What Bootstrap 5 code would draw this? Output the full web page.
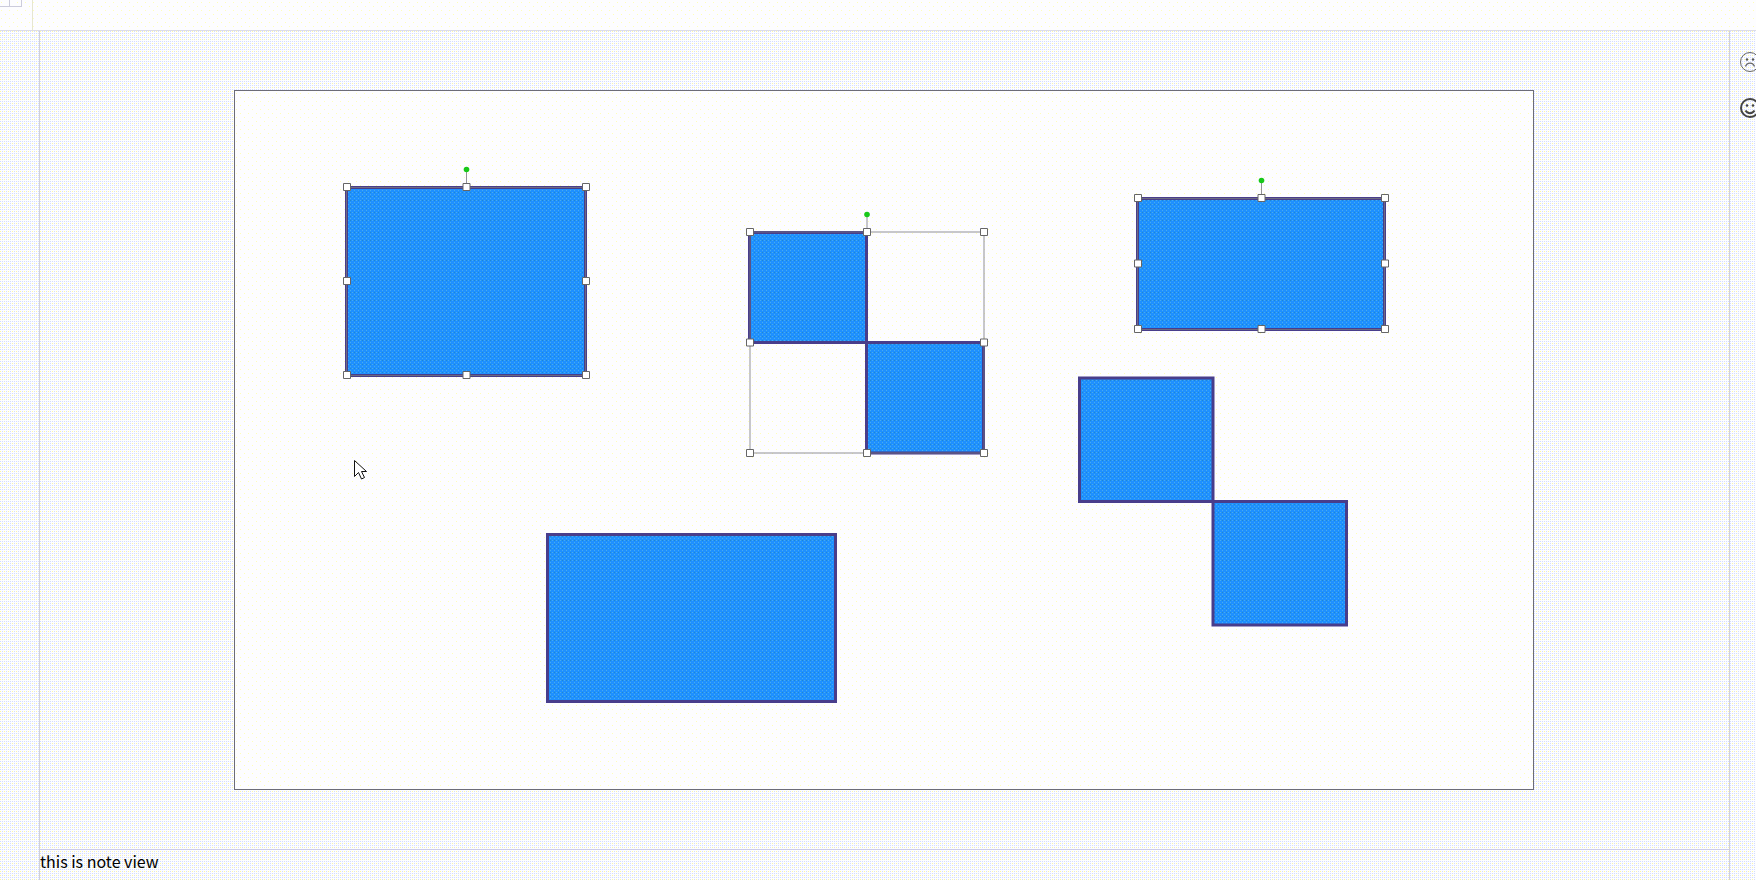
<!DOCTYPE html>
<html lang="en">
<head>
<meta charset="utf-8">
<meta name="viewport" content="width=device-width, initial-scale=1">
<title>Slide editor</title>
<link href="https://cdn.jsdelivr.net/npm/bootstrap@5.3.0/dist/css/bootstrap.min.css" rel="stylesheet">
<style>
body{font-family:"Noto Sans CJK SC","Noto Sans",sans-serif;color:#000}
.dotted{background-color:#fdfdff;
 background-image:conic-gradient(from 0deg at 1px 1px,transparent 75%,#ffffb8 0),conic-gradient(from 0deg at 1px 1px,transparent 75%,#ffffb8 0);background-size:8px 8px;background-position:1px 2px,5px 6px}
.topstrip{height:31px;border-bottom:1px solid #dcdce6}
.corner{width:33px;border-right:1px solid #e6e6d0}
.cells{width:22px;height:7px;border-right:1px solid #ccccdc;border-bottom:1px solid #ccccdc}
.cells i{width:10px;border-right:1px solid #ccccdc}
.work{background-color:#fdfeff;
 background-image:conic-gradient(from 0deg at 1px 1px,transparent 75%,#fff8a0 0),conic-gradient(from 0deg at 1px 1px,transparent 75%,#d4dcff 0);
 background-size:4px 4px,2px 2px}
.gutter{width:40px;border-right:1px solid #d0d0d8}
.rail{width:27px;border-left:1px solid #d0d0d8;padding:20px 0 0 9px;gap:24px}
.face{width:22px;height:22px}
.stage{padding:59px 195px 59px 194px}
.slide{border:1px solid #6c6c78}
.slide svg{width:100%}
.note{border-top:1px solid #ccccea;font-size:16px;line-height:22px}
</style>
</head>
<body class="d-flex flex-column min-vh-100 overflow-hidden">
<header class="topstrip dotted d-flex flex-shrink-0"><div class="corner"><div class="cells d-flex"><i></i></div></div></header>
<main class="work d-flex flex-grow-1">
<div class="gutter flex-shrink-0"></div>
<section class="d-flex flex-column flex-grow-1">
<div class="stage">
<div class="slide dotted">
<svg class="d-block" viewBox="235 91 1298 698" role="img" aria-label="Slide canvas with shapes">
<defs>
<pattern id="blue" width="4" height="4" patternUnits="userSpaceOnUse"><path fill="#1e90ff" d="M0 0h4v4H0z"/><path fill="#48acee" d="M0 0h1v1H0z"/><path fill="#48acee" d="M2 2h1v1H2z"/><path fill="#2288cc" d="M2 0h1v1H2z"/></pattern>
<g id="handle"><path d="M-3.5-3.5h7v7h-7z" fill="#fff" stroke="#666" stroke-width="1"/></g>
</defs>
<g fill="url(#blue)" stroke="#483d8b" stroke-width="3">
<path d="M346.500 187.500h239v188h-239z"/>
<path d="M749.500 232.500h117v110h-117zM866.500 342.500h117v110.500h-117z"/>
<path d="M1137.500 198.500h247v131h-247z"/>
<path d="M1079.500 378h133.500v123.500h-133.500zM1213 501.500h133.500v123.500h-133.500z"/>
<path d="M547.500 534.500h288v167h-288z"/>
</g>
<g fill="none" stroke="#77777d" stroke-opacity=".8">
<path d="M346.500 187.500h239v188h-239zM466.500 187v-15M1137.500 198.500h247v131h-247zM1261.500 198v-15"/>
<path d="M750 232h234v221h-234zM867 232v-15"/>
</g>
<g fill="#18c818"><circle cx="466.500" cy="169.500" r="2.800"/><circle cx="867" cy="214.500" r="2.800"/><circle cx="1261.500" cy="180.500" r="2.800"/></g>
<use href="#handle" x="347" y="187"/><use href="#handle" x="466.500" y="187"/><use href="#handle" x="586" y="187"/><use href="#handle" x="347" y="281"/><use href="#handle" x="586" y="281"/><use href="#handle" x="347" y="375"/><use href="#handle" x="466.500" y="375"/><use href="#handle" x="586" y="375"/>
<use href="#handle" x="750" y="232"/><use href="#handle" x="867" y="232"/><use href="#handle" x="984" y="232"/><use href="#handle" x="750" y="342.500"/><use href="#handle" x="984" y="342.500"/><use href="#handle" x="750" y="453"/><use href="#handle" x="867" y="453"/><use href="#handle" x="984" y="453"/>
<use href="#handle" x="1138" y="198"/><use href="#handle" x="1261.500" y="198"/><use href="#handle" x="1385" y="198"/><use href="#handle" x="1138" y="263.500"/><use href="#handle" x="1385" y="263.500"/><use href="#handle" x="1138" y="329"/><use href="#handle" x="1261.500" y="329"/><use href="#handle" x="1385" y="329"/>
<path d="M354.500 460.500v16l4-4 3 6.500 3-1.500-3-6h5z" fill="#fff" stroke="#111"/>
</svg>
</div>
</div>
<div class="note flex-grow-1">this is note view</div>
</section>
<aside class="rail d-flex flex-column flex-shrink-0 overflow-hidden">
<svg class="face flex-shrink-0" viewBox="0 0 22 22" fill="none" stroke="#666"><circle cx="11" cy="11" r="9.500"/><path d="M6.500 15.500c1.500-4.500 7.500-4.500 9 0" stroke-width="1.300"/><g fill="#555" stroke="none"><circle cx="8" cy="8.500" r="1.200"/><circle cx="14" cy="8.500" r="1.200"/></g></svg>
<svg class="face flex-shrink-0" viewBox="0 0 22 22" fill="none" stroke="#444" stroke-width="2"><circle cx="11" cy="11" r="9"/><path d="M6.500 13.500c2 3.500 7 3.500 9 0"/><g fill="#444" stroke="none"><circle cx="8" cy="8.500" r="1.300"/><circle cx="14" cy="8.500" r="1.300"/></g></svg>
</aside>
</main>
<script src="https://cdn.jsdelivr.net/npm/bootstrap@5.3.0/dist/js/bootstrap.bundle.min.js"></script>
</body>
</html>
